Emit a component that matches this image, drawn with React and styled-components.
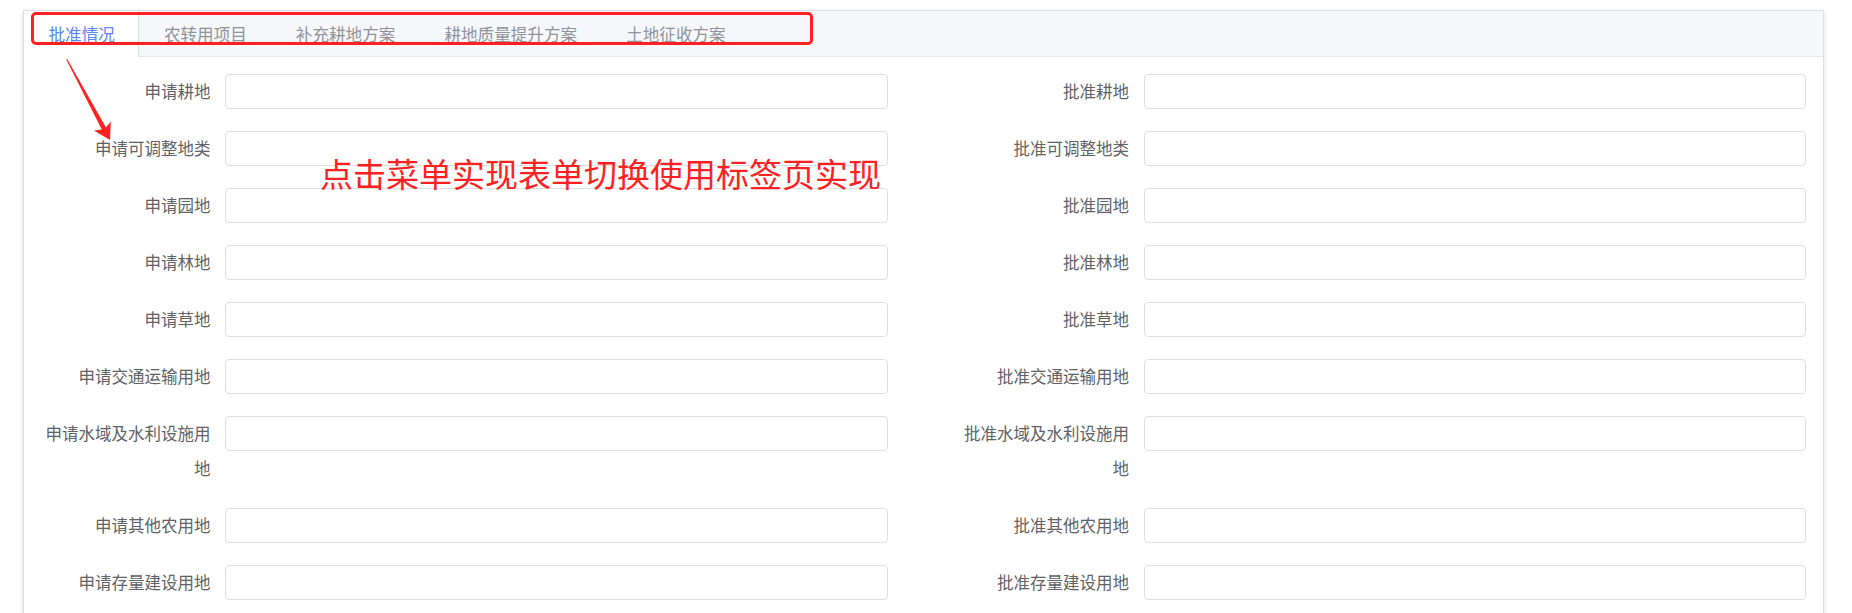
import React from "react";
import styled, { createGlobalStyle } from "styled-components";

const GlobalStyle = createGlobalStyle`
  html, body {
    margin: 0;
    padding: 0;
    overflow: hidden;
    background: #fff;
  }
  body {
    font-family: "Noto Sans CJK SC", "Noto Sans", sans-serif;
  }
`;

const Page = styled.div`
  position: relative;
  padding: 10px 28px 0 23px;
`;

const Card = styled.div`
  border: 1px solid #dcdfe6;
  border-bottom: none;
  background: #fff;
  box-shadow: 0 2px 4px rgba(0, 0, 0, 0.12), 0 0 6px rgba(0, 0, 0, 0.04);
`;

const TabBar = styled.div`
  display: flex;
  height: 45px;
  background: #f5f7fa;
  border-bottom: 1px solid #e4e7ed;
`;

const Tab = styled.div`
  display: flex;
  align-items: center;
  padding: 0 23.5px;
  margin-bottom: -1px;
  font-size: 16.6px;
  white-space: nowrap;
  cursor: pointer;
  color: ${(p) => (p.$active ? "#5a84f0" : "#909399")};
  background: ${(p) => (p.$active ? "#fff" : "transparent")};
  border-left: 1px solid transparent;
  border-right: 1px solid ${(p) => (p.$active ? "#dcdfe6" : "transparent")};
`;

const FormGrid = styled.div`
  display: grid;
  grid-template-columns: 1fr 1fr;
  column-gap: 66px;
  padding: 17px 16.6px 0 11.4px;
`;

const FormItem = styled.div`
  display: flex;
  align-items: flex-start;
  margin-bottom: 22px;
`;

const Label = styled.label`
  flex-shrink: 0;
  box-sizing: border-box;
  width: 190px;
  padding-right: 15px;
  text-align: right;
  font-size: 16.5px;
  line-height: 35px;
  color: #606266;
`;

const Input = styled.input`
  flex: 1;
  min-width: 0;
  box-sizing: border-box;
  height: 35px;
  padding: 0 14px;
  border: 1px solid #dcdfe6;
  border-radius: 4px;
  background: #fff;
  font-size: 16.5px;
  color: #606266;
  outline: none;
`;

const Note = styled.div`
  position: absolute;
  left: 320px;
  top: 157px;
  font-size: 33px;
  line-height: 1;
  color: #ff2121;
  white-space: nowrap;
`;

const Highlight = styled.div`
  position: absolute;
  left: 31px;
  top: 12px;
  width: 782px;
  height: 33px;
  box-sizing: border-box;
  border: 3px solid #ff2121;
  border-radius: 5px;
`;

const ArrowSvg = styled.svg`
  position: absolute;
  left: 0;
  top: 0;
`;

const tabs = ["批准情况", "农转用项目", "补充耕地方案", "耕地质量提升方案", "土地征收方案"];

const fields = [
  "耕地",
  "可调整地类",
  "园地",
  "林地",
  "草地",
  "交通运输用地",
  "水域及水利设施用地",
  "其他农用地",
  "存量建设用地",
];

export default function App() {
  return (
    <>
      <GlobalStyle />
      <Page>
        <Card>
          <TabBar>
            {tabs.map((t, i) => (
              <Tab key={t} $active={i === 0}>
                {t}
              </Tab>
            ))}
          </TabBar>
          <FormGrid>
            {fields.map((f) => (
              <React.Fragment key={f}>
                <FormItem>
                  <Label>申请{f}</Label>
                  <Input />
                </FormItem>
                <FormItem>
                  <Label>批准{f}</Label>
                  <Input />
                </FormItem>
              </React.Fragment>
            ))}
          </FormGrid>
        </Card>

        <Highlight />
        <ArrowSvg width="120" height="150" viewBox="0 0 120 150">
          <polygon
            points="66.2,59.5 101.8,129.6 94,130.4 110,140 110.8,121.4 106,127.4 67.2,59.1"
            fill="#ff2121"
          />
        </ArrowSvg>
        <Note>点击菜单实现表单切换使用标签页实现</Note>
      </Page>
    </>
  );
}
